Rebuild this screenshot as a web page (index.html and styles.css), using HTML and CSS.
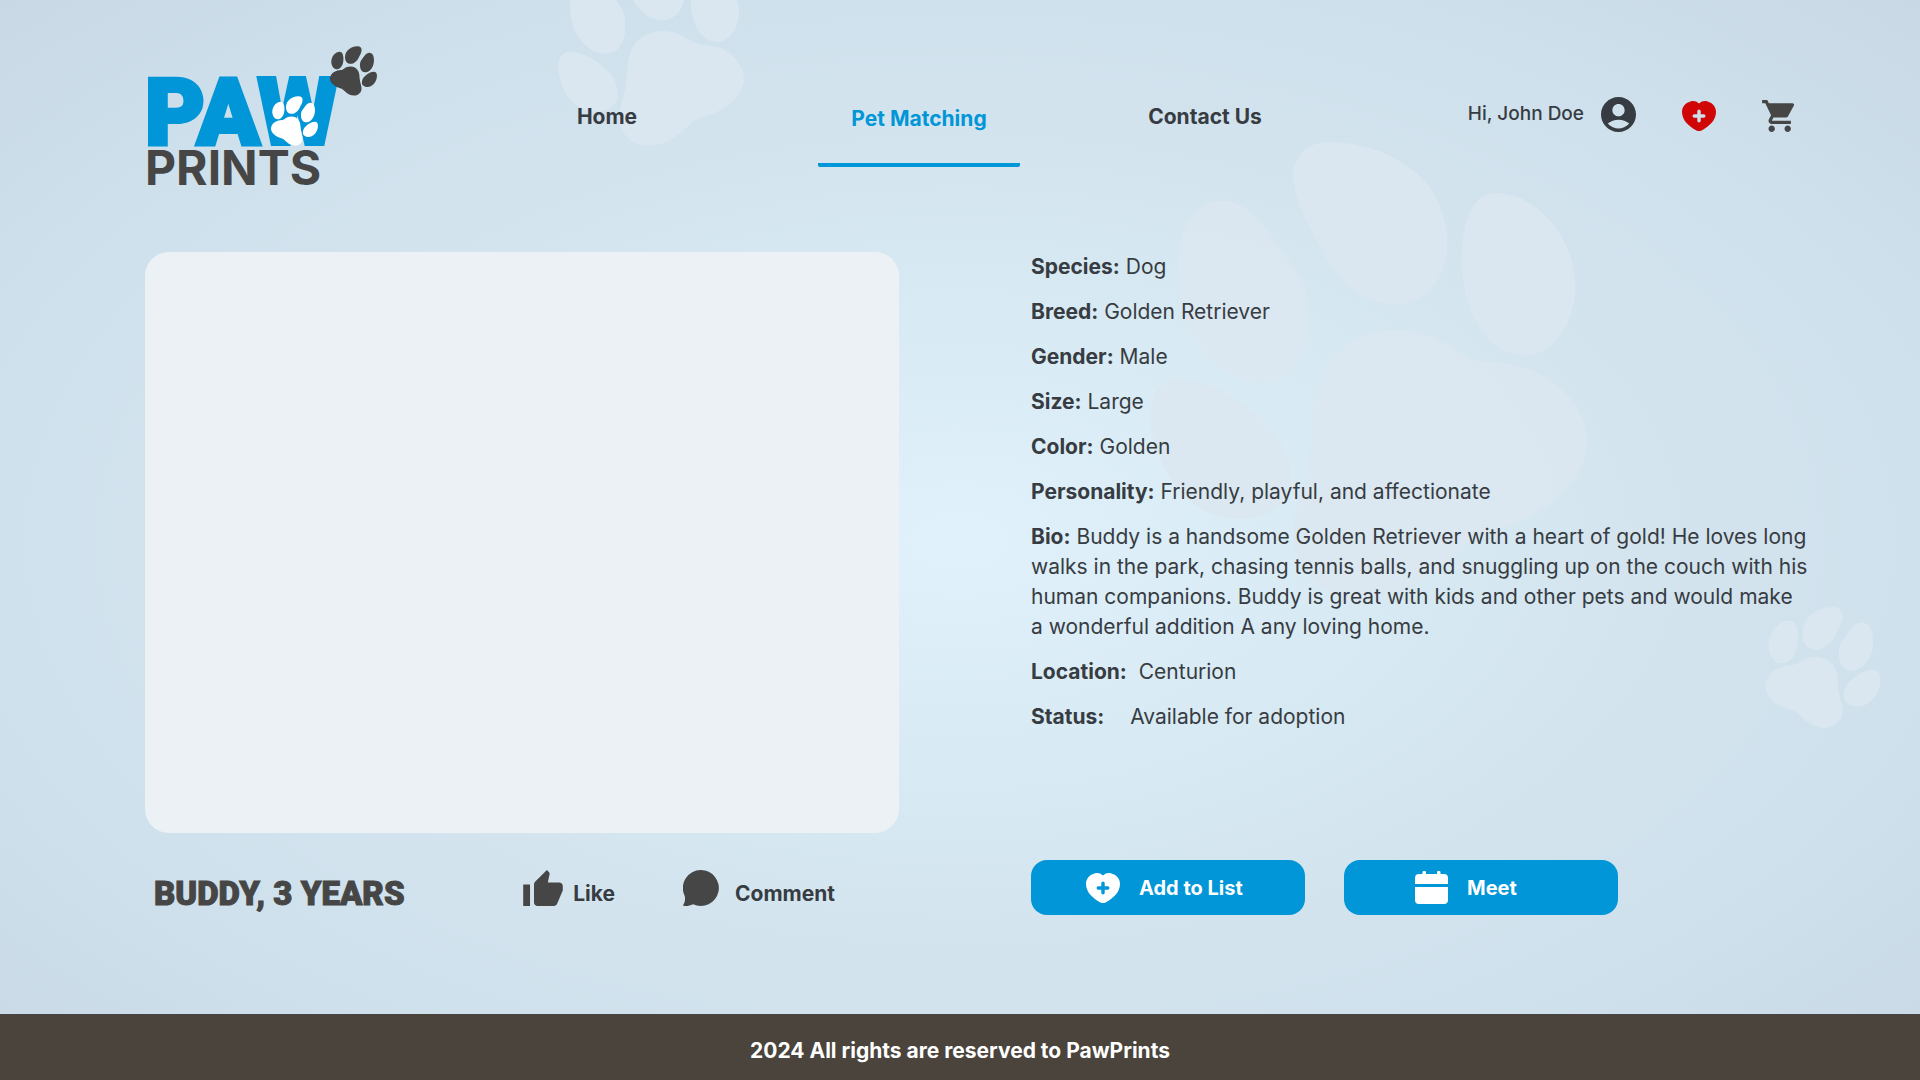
FILE: index.html
```html
<!DOCTYPE html>
<html lang="en">
<head>
  <meta charset="utf-8">
  <meta name="viewport" content="width=device-width, initial-scale=1">
  <title>PawPrints – Pet Matching</title>
  <link rel="stylesheet" href="styles.css">
</head>
<body>
  <svg class="sprite" aria-hidden="true">
    <symbol id="paw" viewBox="30 35 1312 1376">
      <path d="M460 145C455 75 505 35 570 35C690 38 800 85 860 160C905 215 925 285 922 350C920 450 855 522 765 524C670 522 590 450 545 360C510 290 465 225 460 145Z"/>
      <path d="M1073 188C1160 190 1240 260 1280 345C1300 390 1308 430 1307 475C1303 590 1235 677 1155 677C1060 675 1000 585 978 490C960 410 962 330 985 260C1000 215 1030 187 1073 188Z"/>
      <path d="M248 212C320 215 370 275 410 340C450 400 485 430 502 500C520 640 475 755 365 760C250 758 160 660 130 540C105 440 110 350 140 280C160 235 200 210 248 212Z"/>
      <path d="M110 746C200 745 300 805 370 870C420 915 450 975 452 1045C455 1120 385 1168 290 1168C190 1165 110 1095 70 1010C35 940 25 870 35 820C45 775 70 748 110 746Z"/>
      <path d="M772 600C860 600 920 640 960 665C1000 688 1030 696 1080 699C1230 710 1342 820 1342 940C1342 1060 1200 1170 1060 1202C990 1218 955 1265 913 1300C850 1360 770 1408 666 1410C550 1408 475 1320 462 1240C450 1150 505 1060 515 930C522 860 515 790 555 720C600 640 680 600 772 600Z"/>
    </symbol>
    <symbol id="heart-plus" viewBox="0 0 34 30">
      <path fill-rule="evenodd" d="M17 2.600C14.500 0 11.500-.400 8.500.400C3 1.800 0 6 0 11C0 19.500 7 25 13.500 29C16 30.400 18 30.400 20.500 29C27 25 34 19.500 34 11C34 6 31 1.800 25.500.400C22.500-.400 19.500 0 17 2.600ZM17 8.500A1.700 1.700 0 0 1 18.700 10.200V13.300H21.800A1.700 1.700 0 0 1 21.800 16.700H18.700V19.800A1.700 1.700 0 0 1 15.300 19.800V16.700H12.200A1.700 1.700 0 0 1 12.200 13.300H15.300V10.200A1.700 1.700 0 0 1 17 8.500Z"/>
    </symbol>
  </svg>

  <svg class="bg-paw bg-paw-top" aria-hidden="true"><use href="#paw"/></svg>
  <svg class="bg-paw bg-paw-large" aria-hidden="true"><use href="#paw"/></svg>
  <svg class="bg-paw bg-paw-small" aria-hidden="true"><use href="#paw"/></svg>

  <header class="header">
    <a class="logo" href="#" aria-label="Paw Prints">
      <span class="logo-paw">PAW</span>
      <span class="logo-prints">PRINTS</span>
      <svg class="logo-mark logo-mark-white" aria-hidden="true"><use href="#paw"/></svg>
      <svg class="logo-mark logo-mark-dark" aria-hidden="true"><use href="#paw"/></svg>
    </a>
    <nav class="nav">
      <a class="nav-link" href="#">Home</a>
      <a class="nav-link nav-link-active" href="#" aria-current="page">Pet Matching</a>
      <a class="nav-link" href="#">Contact Us</a>
    </nav>
    <div class="tools">
      <a class="account" href="#">
        <span>Hi, John Doe</span>
        <svg class="icon-avatar" viewBox="2 2 20 20" aria-hidden="true"><path d="M12 2C6.480 2 2 6.480 2 12s4.480 10 10 10 10-4.480 10-10S17.520 2 12 2zm0 4c1.930 0 3.500 1.570 3.500 3.500S13.930 13 12 13s-3.500-1.570-3.500-3.500S10.070 6 12 6zm0 14c-2.030 0-4.430-.820-6.140-2.880C7.550 15.800 9.680 15 12 15s4.450.800 6.140 2.120C16.430 19.180 14.030 20 12 20z"/></svg>
      </a>
      <a class="tool tool-heart" href="#" aria-label="My list"><svg class="icon-heart" aria-hidden="true"><use href="#heart-plus"/></svg></a>
      <a class="tool" href="#" aria-label="Cart"><svg class="icon-cart" viewBox="1 2 20.500 20" aria-hidden="true"><path d="M7 18c-1.100 0-1.990.900-1.990 2S5.900 22 7 22s2-.900 2-2-.900-2-2-2zM1 2v2h2l3.600 7.590-1.350 2.450c-.160.280-.250.610-.250.960 0 1.100.900 2 2 2h12v-2H7.420c-.140 0-.250-.110-.250-.250l.030-.120.900-1.630h7.450c.750 0 1.410-.410 1.750-1.030l3.580-6.490c.080-.140.120-.310.120-.480 0-.550-.450-1-1-1H5.210l-.940-2H1zm16 16c-1.100 0-1.990.900-1.990 2s.890 2 1.990 2 2-.900 2-2-.900-2-2-2z"/></svg></a>
    </div>
  </header>

  <main class="main">
    <section class="pet">
      <div class="photo" role="img" aria-label="Photo of Buddy"></div>
      <div class="pet-bar">
        <h1 class="pet-name">BUDDY, 3 YEARS</h1>
        <div class="pet-actions">
          <button class="action" type="button">
            <svg class="icon-like" viewBox="1 1 22 20" aria-hidden="true"><path d="M1 21h3.800V9H1v12zm22-11c0-1.100-.900-2-2-2h-6.310l.950-4.570.030-.320c0-.410-.170-.790-.440-1.060L14.170 1 7.590 7.590C7.220 7.950 7 8.450 7 9v10c0 1.100.900 2 2 2h9c.830 0 1.540-.500 1.840-1.220l3.020-7.050c.090-.230.140-.470.140-.730v-2z"/></svg>
            <span>Like</span>
          </button>
          <button class="action action-comment" type="button">
            <svg class="icon-comment" viewBox="0 0 36 36" aria-hidden="true"><path d="M18 0A18 18 0 1 1 10 34.200C7 35.800 4 36.200 1 35.900C0 35.800 0 35 .500 34.500C1.800 32.500 2.500 29 1.700 26A18 18 0 0 1 18 0Z"/></svg>
            <span>Comment</span>
          </button>
        </div>
      </div>
    </section>

    <section class="details">
      <dl class="facts">
        <div><dt>Species:</dt> <dd>Dog</dd></div>
        <div><dt>Breed:</dt> <dd>Golden Retriever</dd></div>
        <div><dt>Gender:</dt> <dd>Male</dd></div>
        <div><dt>Size:</dt> <dd>Large</dd></div>
        <div><dt>Color:</dt> <dd>Golden</dd></div>
        <div><dt>Personality:</dt> <dd>Friendly, playful, and affectionate</dd></div>
        <div><dt>Bio:</dt> <dd>Buddy is a handsome Golden Retriever with a heart of gold! He loves long walks in the park, chasing tennis balls, and snuggling up on the couch with his human companions. Buddy is great with kids and other pets and would make a&nbsp;wonderful addition A any loving home.</dd></div>
        <div><dt class="term-location">Location:</dt> <dd>Centurion</dd></div>
        <div><dt class="term-status">Status:</dt> <dd>Available for adoption</dd></div>
      </dl>
      <div class="cta">
        <button class="button" type="button">
          <svg class="icon-add" aria-hidden="true"><use href="#heart-plus"/></svg>
          <span>Add to List</span>
        </button>
        <button class="button button-meet" type="button">
          <svg class="icon-calendar" viewBox="0 0 33 33" aria-hidden="true"><path d="M0 13V7Q0 3 4 3H7.500V1.500A1.700 1.700 0 0 1 11 1.500V3H22V1.500A1.700 1.700 0 0 1 25.500 1.500V3H29Q33 3 33 7V13ZM0 16H33V29Q33 33 29 33H4Q0 33 0 29Z"/></svg>
          <span>Meet</span>
        </button>
      </div>
    </section>
  </main>

  <footer class="footer">2024 All rights are reserved to PawPrints</footer>
</body>
</html>
```
FILE: styles.css
```css
* {
  box-sizing: border-box;
}

body {
  position: relative;
  display: flex;
  flex-direction: column;
  min-height: 100vh;
  margin: 0;
  overflow-x: hidden;
  background: radial-gradient(ellipse farthest-corner at center, #e0f1fb 0%, #d7e9f2 33%, #d3e4ef 52%, #cee0eb 76%, #c8d9e5 100%);
  color: #373c42;
  font-family: Inter, "Open Sans", sans-serif;
  font-size: 21px;
  line-height: 30px;
}

a {
  color: inherit;
  text-decoration: none;
}

button {
  border: 0;
  padding: 0;
  background: none;
  color: inherit;
  font: inherit;
  font-weight: 700;
  cursor: pointer;
}

svg {
  display: block;
  flex: none;
  fill: currentColor;
}

.sprite {
  position: absolute;
  width: 0;
  height: 0;
}

/* Decorative paws behind the page */
.bg-paw {
  position: absolute;
  z-index: -1;
  color: #dce8f1;
  opacity: 0.9;
}

.bg-paw-top {
  top: -49px;
  left: 558px;
  width: 186px;
  height: 195px;
}

.bg-paw-large {
  top: 142px;
  left: 1150px;
  width: 437px;
  height: 458px;
}

.bg-paw-small {
  top: 607px;
  right: 39px;
  width: 116px;
  height: 121px;
  transform: scaleX(-1);
}

/* Header */
.header {
  display: flex;
  align-items: flex-start;
  padding: 46px 125px 0 145px;
}

.logo {
  position: relative;
  display: flex;
  flex-direction: column;
  width: 232px;
  height: 142px;
  padding-top: 32px;
}

.logo-paw {
  color: #0096d8;
  font-family: Roboto, sans-serif;
  font-size: 92px;
  font-weight: 900;
  line-height: 70px;
  -webkit-text-stroke: 4px #0096d8;
}

.logo-prints {
  color: #464646;
  font-size: 48px;
  font-weight: 700;
  line-height: 40px;
}

.logo-mark {
  position: absolute;
  width: 47px;
  height: 50px;
  transform: scaleX(-1);
}

.logo-mark-white {
  top: 50px;
  left: 126px;
  color: #fff;
}

.logo-mark-dark {
  top: 0;
  right: 0;
  color: #464646;
}

.nav {
  display: flex;
  flex: 1;
  justify-content: space-between;
  max-width: 800px;
  margin-left: 129px;
  padding-top: 56px;
}

.nav-link {
  width: 202px;
  height: 65px;
  font-weight: 700;
  text-align: center;
}

.nav-link-active {
  margin-left: 26px;
  padding-top: 2px;
  border-bottom: 4px solid #0096d8;
  border-radius: 2px;
  color: #0096d8;
}

.tools {
  display: flex;
  align-items: center;
  height: 36px;
  margin-top: 50px;
  margin-left: auto;
}

.account {
  display: flex;
  align-items: center;
  gap: 17px;
  font-size: 19px;
  font-weight: 500;
}

.tool {
  margin-left: 46px;
  color: #464646;
}

.tool-heart {
  color: #d00606;
}

.icon-avatar {
  width: 35px;
  height: 35px;
}

.icon-heart {
  width: 34px;
  height: 30px;
  margin-top: 3px;
}

.icon-cart {
  width: 33px;
  height: 32px;
  margin-top: 3px;
}

/* Pet profile */
.main {
  display: grid;
  flex: 1;
  grid-template-columns: 754fr 784fr;
  align-content: start;
  gap: 132px;
  padding: 64px 105px 96px 145px;
}

.photo {
  aspect-ratio: 754 / 581;
  border-radius: 24px;
  background: #ecf1f6;
}

.pet-bar {
  display: flex;
  align-items: center;
  justify-content: space-between;
  height: 55px;
  margin-top: 27px;
  padding: 0 64px 0 9px;
}

.pet-name {
  margin: 0;
  padding-top: 12px;
  color: #464646;
  font-family: Roboto, sans-serif;
  font-size: 33px;
  font-weight: 900;
  line-height: 40px;
  -webkit-text-stroke: 1px #464646;
}

.pet-actions {
  display: flex;
  gap: 68px;
}

.action {
  display: flex;
  align-items: center;
  gap: 10px;
}

.action-comment {
  gap: 16px;
}

.action span {
  padding-top: 12px;
}

.action svg {
  color: #464646;
}

.icon-like {
  width: 40px;
  height: 36px;
}

.icon-comment {
  width: 36px;
  height: 36px;
}

.details {
  display: flex;
  flex-direction: column;
  justify-content: space-between;
}

.facts {
  display: grid;
  gap: 15px;
  margin: 0;
}

.facts dt,
.facts dd {
  display: inline;
  margin: 0;
}

.facts dt {
  font-weight: 700;
}

.facts .term-location {
  margin-right: 6px;
}

.facts .term-status {
  margin-right: 20px;
}

.cta {
  display: flex;
  gap: 39px;
}

.button {
  display: flex;
  align-items: center;
  gap: 19px;
  width: 274px;
  height: 55px;
  padding-left: 55px;
  border-radius: 16px;
  background: #0096d8;
  color: #fff;
  font-size: 20px;
}

.button-meet {
  padding-left: 71px;
}

.icon-add {
  width: 34px;
  height: 30px;
}

.icon-calendar {
  width: 33px;
  height: 33px;
}

.footer {
  padding: 22px 20px 14px;
  background: #4a443c;
  color: #fff;
  font-weight: 700;
  text-align: center;
}
```
